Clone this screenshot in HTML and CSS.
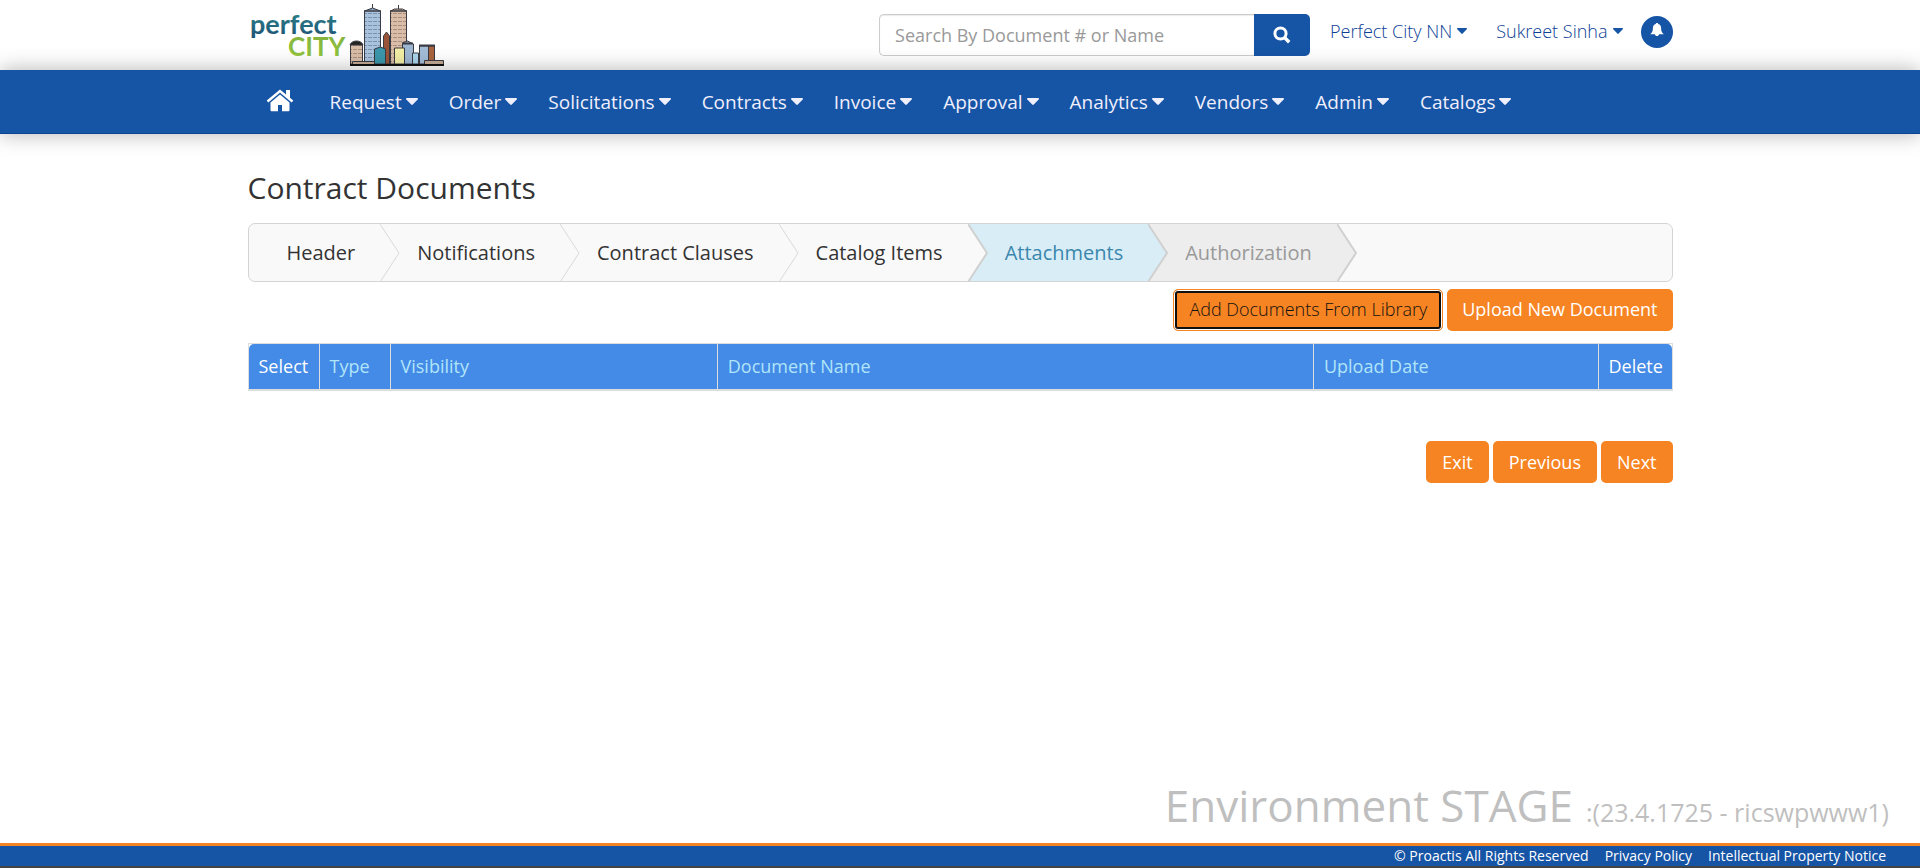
FILE: index.html
```html
<!DOCTYPE html>
<html lang="en">
<head>
<meta charset="utf-8">
<title>Contract Documents</title>
<link rel="stylesheet" href="styles.css">
</head>
<body>
<svg class="sprite" aria-hidden="true">
  <symbol id="caret" viewBox="0 0 12 7"><path d="M0.9 0h10.2c.8 0 1.1.8.6 1.4L6.8 6.6c-.5.5-1.1.5-1.6 0L.3 1.4C-.2.8.1 0 .9 0z"/></symbol>
</svg>
<header class="topbar">
  <div class="container topbar-inner">
    <a class="logo" href="#" aria-label="Perfect City">
      <svg width="200" height="66" viewBox="0 0 200 66">
        <defs>
          <linearGradient id="teal" x1="0" y1="0" x2="0" y2="1"><stop offset="0" stop-color="#2f8a8c"/><stop offset="1" stop-color="#1d4f74"/></linearGradient>
          <linearGradient id="green" x1="0" y1="0" x2="0" y2="1"><stop offset="0" stop-color="#7fae3c"/><stop offset="1" stop-color="#97c93f"/></linearGradient>
          <pattern id="winA" width="5" height="4" patternUnits="userSpaceOnUse"><rect width="5" height="4" fill="#a9c2dc"/><path d="M0 1.500h4" stroke="#7892b0"/></pattern>
          <pattern id="winB" width="5" height="4" patternUnits="userSpaceOnUse"><rect width="5" height="4" fill="#d9bda8"/><path d="M0 1.500h4" stroke="#ab8f7d"/></pattern>
        </defs>
        <text class="logo-perfect" x="2" y="34" fill="url(#teal)">perfect</text>
        <text class="logo-city" x="40" y="56" fill="url(#green)">CITY</text>
        <g stroke="#3a3a42" stroke-width="1">
          <path d="M124.500 4v6M150.500 5v4" fill="none"/>
          <path d="M116.500 64V11l8-3 8 3v53z" fill="url(#winA)"/>
          <path d="M142.500 64V11l4-2h8l4 2v53z" fill="url(#winB)"/>
          <path d="M116 11h17M142 11h17" stroke-width="1.500"/>
          <path d="M102.500 64V44h12v20z" fill="url(#winB)"/>
          <path d="M102 45c1-3 4-4 6.500-4s5.500 1 6.500 4z" fill="#222"/>
          <path d="M135.500 64V36l3-4 3 4v28z" fill="#9a5438"/>
          <path d="M126.500 64V49l6-2 5 2v15z" fill="#3b97ab"/>
          <path d="M154.500 64V43l5-2 6 3v20z" fill="#9db6d2"/>
          <path d="M154 43.500h11" stroke-width="2"/>
          <path d="M146.500 64V48h10v16z" fill="#f2eea5"/>
          <path d="M164.500 64V53h6v11z" fill="#a9d4ec"/>
          <path d="M171.500 64V46h9v18z" fill="#a3bcd8"/><path d="M180.500 64V46h6v18z" fill="#a8643e"/>
          <path d="M171 45.500h16" stroke-width="2"/>
          <path d="M104.500 61.500h22v3h-22zM176.500 60.500h19v4h-19z" fill="#c5ab96"/>
          <path d="M102 65h94" stroke="#111" stroke-width="2"/>
        </g>
      </svg>
    </a>
    <form class="search" role="search">
      <input class="search-input" type="text" placeholder="Search By Document # or Name" aria-label="Search By Document # or Name">
      <button class="search-button" type="button" aria-label="Search"><svg width="18" height="18" viewBox="0 0 18 18"><circle cx="7.5" cy="7.5" r="5.6" fill="none" stroke="#fff" stroke-width="3"/><path d="M11.800 11.800l4.400 4.400" stroke="#fff" stroke-width="3.400"/></svg></button>
    </form>
    <div class="account">
      <a class="account-link" href="#">Perfect City NN<svg class="caret-small"><use href="#caret"/></svg></a>
      <a class="account-link" href="#">Sukreet Sinha<svg class="caret-small"><use href="#caret"/></svg></a>
      <button class="bell" type="button" aria-label="Notifications"><svg width="14" height="14" viewBox="0 0 14 14"><path d="M7 0c.8 0 1.200.4 1.200 1 2 .5 2.900 2 2.900 4 0 3 .6 4.600 2.700 6.200H9c0 1.100-.8 1.800-2 1.800s-2-.7-2-1.800H.2C2.300 9.600 2.900 8 2.900 5c0-2 .9-3.500 2.900-4C5.800.4 6.200 0 7 0z" fill="#fff"/></svg></button>
    </div>
  </div>
</header>
<nav class="mainnav">
  <div class="container mainnav-inner">
    <a class="home" href="#" aria-label="Home"><svg width="28" height="23" viewBox="0 0 28 23"><path d="M14 5.500l9.500 8V21c0 .8-.5 1.300-1.300 1.300H16V16h-4v6.300H5.800c-.8 0-1.300-.5-1.300-1.300v-7.500z" fill="#fff"/><path d="M1.500 12.500L14 2l12.500 10.500" fill="none" stroke="#fff" stroke-width="2.400"/><path d="M20 1h4v9l-4-3.500z" fill="#fff"/></svg></a>
    <a class="nav-link" href="#">Request<svg class="caret"><use href="#caret"/></svg></a>
    <a class="nav-link" href="#">Order<svg class="caret"><use href="#caret"/></svg></a>
    <a class="nav-link" href="#">Solicitations<svg class="caret"><use href="#caret"/></svg></a>
    <a class="nav-link" href="#">Contracts<svg class="caret"><use href="#caret"/></svg></a>
    <a class="nav-link" href="#">Invoice<svg class="caret"><use href="#caret"/></svg></a>
    <a class="nav-link" href="#">Approval<svg class="caret"><use href="#caret"/></svg></a>
    <a class="nav-link" href="#">Analytics<svg class="caret"><use href="#caret"/></svg></a>
    <a class="nav-link" href="#">Vendors<svg class="caret"><use href="#caret"/></svg></a>
    <a class="nav-link" href="#">Admin<svg class="caret"><use href="#caret"/></svg></a>
    <a class="nav-link" href="#">Catalogs<svg class="caret"><use href="#caret"/></svg></a>
  </div>
</nav>
<main class="container content">
  <h1 class="title">Contract Documents</h1>
  <ol class="steps">
    <li class="step"><a href="#">Header</a><svg class="arrow" viewBox="0 0 20 58"><path d="M0 0l19 29L0 58"/></svg></li>
    <li class="step"><a href="#">Notifications</a><svg class="arrow" viewBox="0 0 20 58"><path d="M0 0l19 29L0 58"/></svg></li>
    <li class="step"><a href="#">Contract Clauses</a><svg class="arrow" viewBox="0 0 20 58"><path d="M0 0l19 29L0 58"/></svg></li>
    <li class="step before-active"><a href="#">Catalog Items</a><svg class="arrow" viewBox="0 0 20 58"><path d="M0 0l19 29L0 58"/></svg></li>
    <li class="step active"><a href="#">Attachments</a><svg class="arrow" viewBox="0 0 20 58"><path d="M0 0l19 29L0 58"/></svg></li>
    <li class="step disabled"><span>Authorization</span><svg class="arrow" viewBox="0 0 20 58"><path d="M0 0l19 29L0 58"/></svg></li>
  </ol>
  <div class="actions">
    <button class="btn btn-focus" type="button">Add Documents From Library</button>
    <button class="btn" type="button">Upload New Document</button>
  </div>
  <table class="docs">
    <colgroup><col class="c-select"><col class="c-type"><col class="c-vis"><col class="c-name"><col class="c-date"><col class="c-del"></colgroup>
    <thead><tr><th>Select</th><th><a href="#">Type</a></th><th><a href="#">Visibility</a></th><th><a href="#">Document Name</a></th><th><a href="#">Upload Date</a></th><th>Delete</th></tr></thead>
  </table>
  <div class="actions actions-bottom">
    <button class="btn" type="button">Exit</button>
    <button class="btn" type="button">Previous</button>
    <button class="btn" type="button">Next</button>
  </div>
</main>
<div class="environment"><span class="env-name">Environment STAGE</span><span class="env-version">:(23.4.1725 - ricswpwww1)</span></div>
<footer class="footer">
  <span>© Proactis All Rights Reserved</span>
  <a href="#">Privacy Policy</a>
  <a href="#">Intellectual Property Notice</a>
</footer>
</body>
</html>
```
FILE: styles.css
```css
* { box-sizing: border-box; }
body {
  margin: 0;
  min-height: 100vh;
  display: flex;
  flex-direction: column;
  background: #fff;
  color: #333;
  font-family: "Open Sans", "Noto Sans", sans-serif;
  font-size: 18px;
}
a { color: inherit; text-decoration: none; }
button, input { font: inherit; }
svg { display: block; flex: none; }
.sprite { display: none; }
.container { width: 1425px; max-width: 100%; margin: 0 auto; }

.topbar { height: 70px; }
.topbar-inner { display: flex; align-items: flex-start; }
.logo { margin-right: auto; }
.logo-perfect { font: 700 27px Lato, "Open Sans", sans-serif; }
.logo-city { font: 700 26px Lato, "Open Sans", sans-serif; }
.search { display: flex; width: 431px; margin: 14px 20px 0 0; }
.search-input {
  flex: 1;
  min-width: 0;
  height: 42px;
  padding: 0 15px;
  border: 1px solid #ccc;
  border-right: 0;
  border-radius: 5px 0 0 5px;
  box-shadow: inset 0 1px 1px rgba(0, 0, 0, .08);
}
.search-input::placeholder { color: #999; opacity: 1; }
.search-button {
  display: grid;
  place-items: center;
  width: 56px;
  height: 42px;
  border: 0;
  border-radius: 0 5px 5px 0;
  background: #1654a5;
}
.account { display: flex; align-items: flex-start; margin-top: 16px; }
.account-link {
  display: flex;
  align-items: center;
  gap: 5px;
  margin-right: 29px;
  color: #0b4096;
  font-weight: 300;
  line-height: 30px;
}
.account-link + .account-link { margin-right: 18px; }
.caret-small { width: 10px; height: 6px; fill: #1654a5; }
.bell {
  display: grid;
  justify-items: center;
  align-items: start;
  width: 32px;
  height: 32px;
  padding: 7px 0 0;
  border: 0;
  border-radius: 50%;
  background: #1654a5;
}

.mainnav {
  height: 64px;
  border-bottom: 1px solid #0d458f;
  background: #1654a5;
  box-shadow: 0 0 20px rgba(0, 0, 0, .3);
  color: #f0effc;
  font-size: 19px;
}
.mainnav-inner { display: flex; align-items: center; gap: 31px; height: 63px; }
.home { margin: 0 5px 2px 18px; }
.nav-link { display: flex; align-items: center; gap: 4px; }
.caret { width: 12px; height: 7px; fill: #f0effc; }

.title { margin: 33px 0 14px; font-size: 30px; font-weight: 400; line-height: 42px; }
.steps {
  display: flex;
  height: 59px;
  margin: 0;
  padding: 0 0 0 1px;
  overflow: hidden;
  border: 1px solid #d4d4d4;
  border-radius: 7px;
  background: #f9f9f9;
  list-style: none;
  font-size: 20px;
}
.step {
  position: relative;
  display: flex;
  align-items: center;
  padding: 0 25px 1px 37px;
}
.arrow { position: absolute; left: 100%; top: 0; z-index: 1; width: 20px; height: 58px; fill: #f9f9f9; stroke: #d9d9d9; }
.before-active .arrow, .active .arrow, .disabled .arrow { stroke: #d0d0d0; stroke-width: 2px; }
.active { background: #d9edf7; color: #3a87ad; }
.active .arrow { fill: #d9edf7; }
.disabled { background: #ededed; color: #999; }
.disabled .arrow { fill: #ededed; }

.actions { display: flex; justify-content: flex-end; gap: 4px; margin: 7px 0 12px; }
.btn {
  height: 42px;
  padding: 0 15px 2px;
  border: 0;
  border-radius: 5px;
  background: #f78422;
  color: #fff;
}
.btn-focus {
  border: 1px solid #f78422;
  box-shadow: inset 0 0 0 1px #fff, inset 0 0 0 3px #101010;
  color: #111;
  font-weight: 300;
}
.docs {
  width: 100%;
  table-layout: fixed;
  border: 1px solid #ddd;
  border-bottom-width: 2px;
  border-spacing: 0;
  border-collapse: separate;
}
.docs th {
  height: 45px;
  padding: 0 8px 2px 10px;
  border-left: 1px solid #ddd;
  background: #448ae7;
  color: #fff;
  font-weight: 400;
  text-align: left;
}
.docs th:first-child { border-left: 0; border-top-left-radius: 5px; }
.docs th:last-child { border-top-right-radius: 5px; }
.docs a { color: #b0e5f8; }
.c-select { width: 70px; }
.c-type { width: 71px; }
.c-vis { width: 23%; }
.c-name { width: auto; }
.c-date { width: 20%; }
.c-del { width: 74px; }
.actions-bottom { margin: 50px 0 0; }
.actions-bottom .btn { padding: 0 16px 1px; }

.environment {
  display: flex;
  justify-content: flex-end;
  align-items: baseline;
  gap: 13px;
  margin-top: auto;
  padding: 0 31px 1px 0;
  color: #bfbfbf;
  line-height: 60px;
}
.env-name { font-size: 44px; }
.env-version { font-size: 25px; }
.footer {
  display: flex;
  justify-content: flex-end;
  align-items: center;
  gap: 16px;
  height: 25px;
  padding: 0 34px 1px 0;
  border-top: 3px solid #f78422;
  border-bottom: 2px solid #444;
  background: #1654a5;
  color: #fff;
  font-size: 14px;
}
```
